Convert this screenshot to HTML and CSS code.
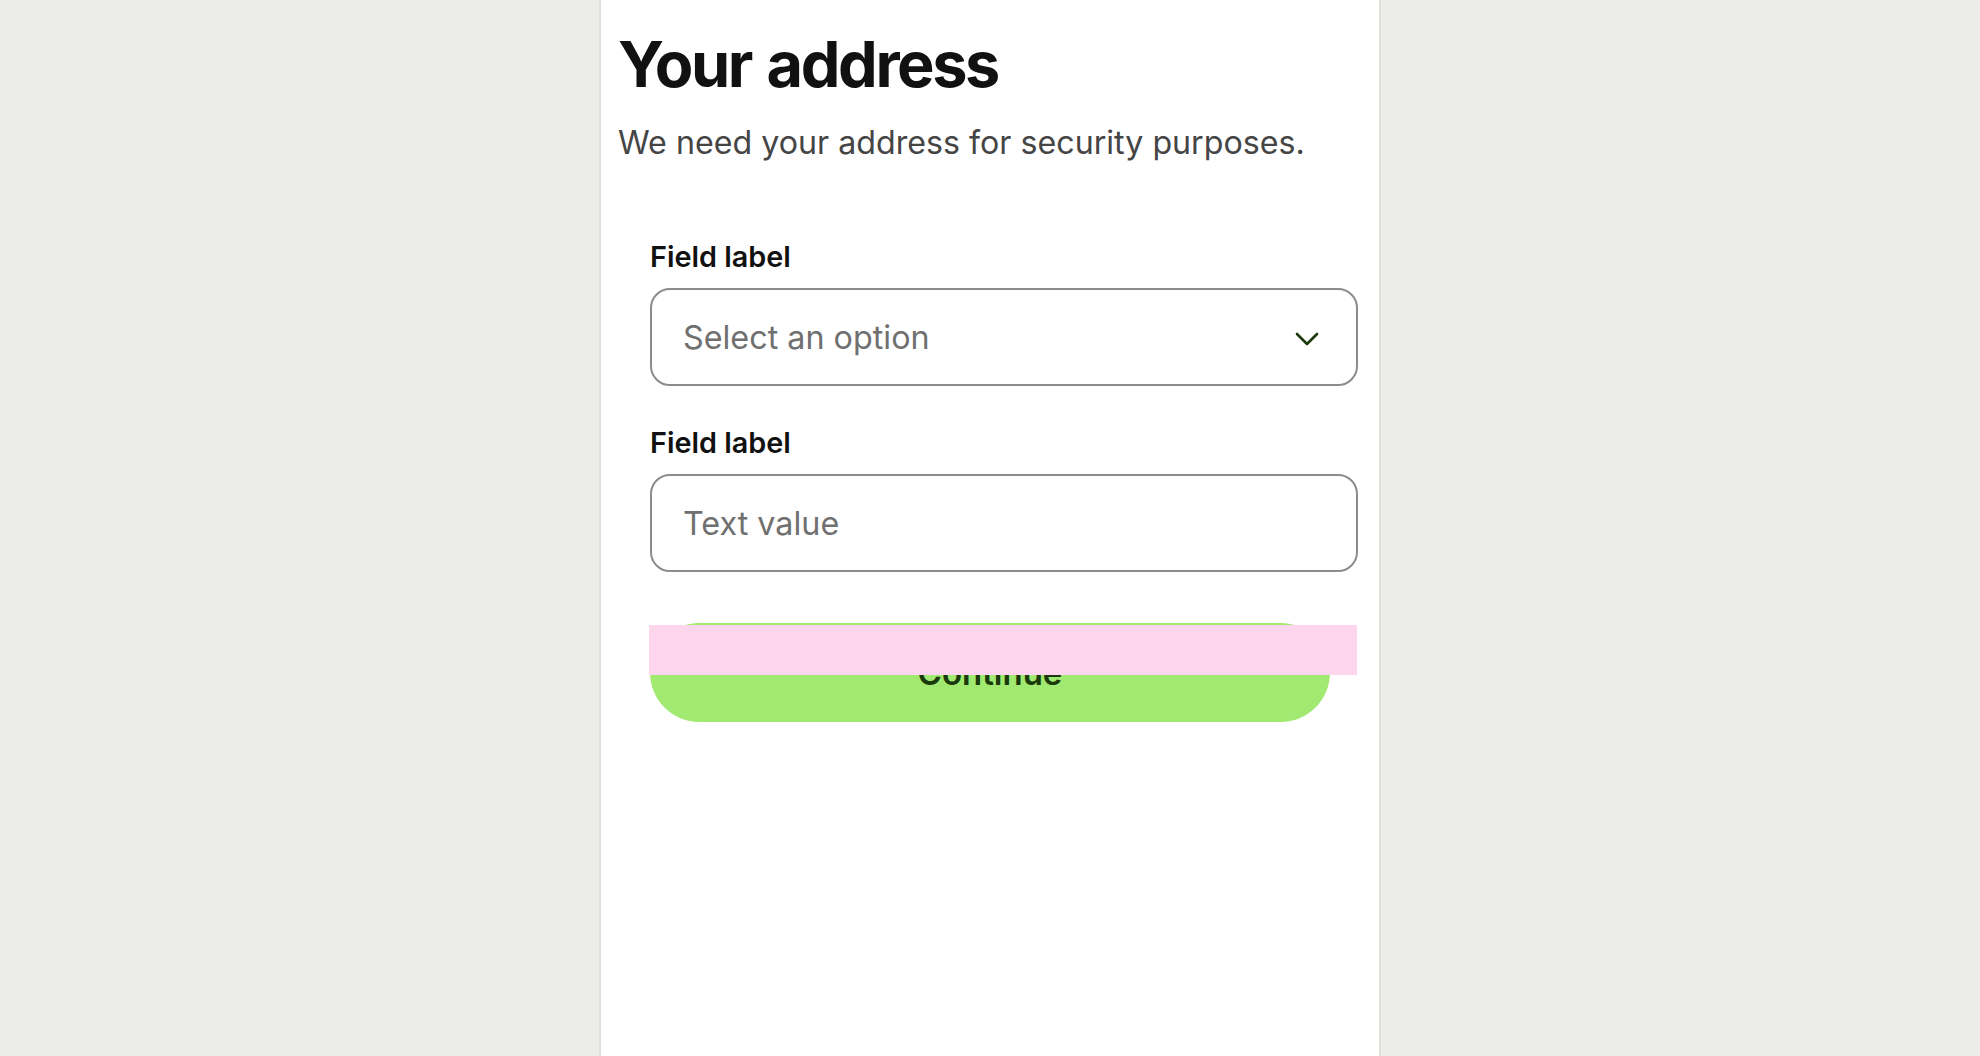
FILE: index.html
```html
<!DOCTYPE html>
<html>
  <head>
    <title>Your address</title>
    <link rel="stylesheet" href="styles.css">
  </head>
  <body>
    <div class="page">
      <h1 class="title">Your address</h1>
      <p class="subtitle">We need your address for security purposes.</p>

      <form class="address-form">
        <div class="field">
          <label class="field-label">Field label</label>
          <div class="select-box">
            <span class="select-placeholder">Select an option</span>
            <svg class="chevron" width="24" height="14" viewBox="0 0 24 14">
              <path d="M2 2 L12 12 L22 2" fill="none" stroke="#1b3a0b" stroke-width="2.6" stroke-linecap="round" stroke-linejoin="round"/>
            </svg>
          </div>
        </div>

        <div class="field">
          <label class="field-label">Field label</label>
          <input class="text-input" type="text" placeholder="Text value">
        </div>

        <div class="actions">
          <button class="continue-button" type="button">Continue</button>
          <div class="highlight"></div>
        </div>
      </form>
    </div>
  </body>
</html>
```

FILE: styles.css
```css
body {
  margin: 0;
  background-color: #ecede8;
  font-family: Inter, "Noto Sans", sans-serif;
  color: #111111;
}

.page {
  width: 778px;
  min-height: 100vh;
  margin: 0 auto;
  background-color: white;
  border-left: 2px solid #dfe0db;
  border-right: 2px solid #dfe0db;
  padding: 26px 0 0 0;
  box-sizing: content-box;
}

.title {
  margin: 0 0 0 17px;
  font-size: 63px;
  line-height: 77px;
  font-weight: 700;
  letter-spacing: -2.4px;
  word-spacing: 3px;
  color: #111111;
}

.subtitle {
  margin: 17px 0 0 17px;
  font-size: 32.2px;
  line-height: 46px;
  color: #454545;
}

.address-form {
  width: 708px;
  margin: 71px 0 0 49px;
}

.field {
  display: flex;
  flex-direction: column;
  gap: 11px;
  margin-bottom: 37px;
}

.field-label {
  font-size: 28.8px;
  line-height: 40px;
  font-weight: 600;
  color: #111111;
}

.select-box,
.text-input {
  height: 98px;
  box-sizing: border-box;
  border: 2px solid #8c8c8c;
  border-radius: 20px;
  background-color: white;
  font-family: Inter, "Noto Sans", sans-serif;
  font-size: 32.3px;
  padding: 0 38px 0 31px;
}

.select-box {
  display: flex;
  align-items: center;
  justify-content: space-between;
  cursor: pointer;
}

.select-placeholder {
  color: #707070;
}

.chevron {
  display: block;
  margin: 3px -1px 0 0;
}

.text-input {
  width: 100%;
  color: #111111;
  outline: none;
}

.text-input::placeholder {
  color: #707070;
}

.actions {
  position: relative;
  padding-top: 14px;
}

.continue-button {
  width: 680px;
  height: 99px;
  border: none;
  border-radius: 50px;
  background-color: #a1e970;
  color: #1b3a0b;
  font-family: Inter, "Noto Sans", sans-serif;
  font-size: 33px;
  font-weight: 600;
  cursor: pointer;
}

.highlight {
  position: absolute;
  top: 16px;
  left: -1px;
  width: 708px;
  height: 50px;
  background-color: #fdd6ee;
}
```
